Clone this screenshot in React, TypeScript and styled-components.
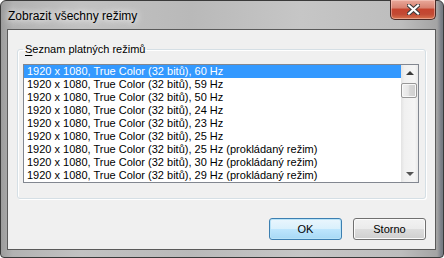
import React from "react";
import styled, { createGlobalStyle } from "styled-components";

const GlobalStyle = createGlobalStyle`
  html, body {
    margin: 0;
    padding: 0;
    background: #ffffff;
  }
  body {
    width: 444px;
    height: 258px;
    overflow: hidden;
    font-family: "Liberation Sans", "Noto Sans", sans-serif;
    font-size: 11px;
    color: #000;
  }
`;

const modes = [
  "1920 x 1080, True Color (32 bitů), 60 Hz",
  "1920 x 1080, True Color (32 bitů), 59 Hz",
  "1920 x 1080, True Color (32 bitů), 50 Hz",
  "1920 x 1080, True Color (32 bitů), 24 Hz",
  "1920 x 1080, True Color (32 bitů), 23 Hz",
  "1920 x 1080, True Color (32 bitů), 25 Hz",
  "1920 x 1080, True Color (32 bitů), 25 Hz (prokládaný režim)",
  "1920 x 1080, True Color (32 bitů), 30 Hz (prokládaný režim)",
  "1920 x 1080, True Color (32 bitů), 29 Hz (prokládaný režim)",
];

const Window = styled.div`
  box-sizing: border-box;
  width: 444px;
  height: 258px;
  border: 1px solid #3a3a3a;
  border-radius: 6px 6px 4px 4px;
  padding: 0 7px 7px 6px;
  display: flex;
  flex-direction: column;
  background: linear-gradient(
    to right,
    #9c9c9c 0px,
    #b2b2b2 12px,
    #c2c2c2 80px,
    #b9b9b9 190px,
    #c6c6c6 300px,
    #bdbdbd 400px,
    #a4a4a4 436px,
    #7d8189 440px,
    #6e7279 444px
  );
`;

const TitleBar = styled.div`
  height: 28px;
  display: flex;
  align-items: flex-start;
  justify-content: space-between;
`;

const Title = styled.span`
  margin: 7px 0 0 1px;
  line-height: 16px;
  font-size: 12px;
  color: #000;
  text-shadow: 0 0 6px #fff, 0 0 10px rgba(255, 255, 255, 0.9);
`;

const CloseButton = styled.button`
  box-sizing: border-box;
  width: 46px;
  height: 20px;
  margin-top: -1px;
  padding: 0;
  border: 1px solid #4a2a26;
  border-top: none;
  border-radius: 0 0 5px 5px;
  display: flex;
  align-items: center;
  justify-content: center;
  background: linear-gradient(
    to bottom,
    #e9a99b 0%,
    #d88372 40%,
    #c5442e 50%,
    #c24a34 75%,
    #d7744e 100%
  );
  box-shadow: inset 0 0 0 1px rgba(255, 220, 210, 0.45);
`;

const Client = styled.div`
  flex: 1;
  border: 1px solid #5a5a5a;
  background: #f0f0f0;
  display: flex;
  flex-direction: column;
`;

const Group = styled.fieldset`
  margin: 11px 9px 0 9px;
  padding: 7px 6px 15px 5px;
  border: 1px solid #d5dfe5;
  border-radius: 3px;
  box-shadow: inset 1px 1px 0 #fff, 1px 1px 0 #fff;
  min-width: 0;
`;

const Legend = styled.legend`
  padding: 0 2px;
  line-height: 16px;
  height: 16px;
  font-size: 11px;
  color: #000;

  u {
    text-decoration: underline;
    text-underline-offset: 2px;
  }
`;

const ListBox = styled.div`
  height: 117px;
  border: 1px solid #828790;
  background: #fff;
  display: flex;
`;

const Items = styled.ul`
  flex: 1;
  margin: 0;
  padding: 0;
  list-style: none;
  overflow: hidden;
`;

const Item = styled.li<{ $selected?: boolean }>`
  height: 13px;
  line-height: 13px;
  padding-left: 3px;
  white-space: nowrap;
  font-size: 11px;
  color: ${(p) => (p.$selected ? "#fff" : "#000")};
  background: ${(p) => (p.$selected ? "#3399ff" : "transparent")};
`;

const ScrollBar = styled.div`
  width: 17px;
  display: flex;
  flex-direction: column;
  background: linear-gradient(to right, #e3e3e3, #f0f0f0 20%, #f5f5f5 80%, #e9e9e9);
`;

const ArrowButton = styled.div`
  height: 17px;
  display: flex;
  align-items: center;
  justify-content: center;
`;

const Arrow = styled.span<{ $down?: boolean }>`
  width: 0;
  height: 0;
  border-left: 4px solid transparent;
  border-right: 4px solid transparent;
  ${(p) =>
    p.$down
      ? "border-top: 4px solid #555; margin-top: 1px;"
      : "border-bottom: 4px solid #3a3a3a; margin-bottom: 1px;"}
`;

const Track = styled.div`
  flex: 1;
  padding-top: 1px;
`;

const Thumb = styled.div`
  box-sizing: border-box;
  height: 15px;
  margin: 0 1px 0 0;
  border: 1px solid #979797;
  border-radius: 2px;
  background: linear-gradient(to right, #f1f1f1, #e6e6e6 45%, #d6d6d6 55%, #cfcfcf);
  box-shadow: inset 0 0 0 1px #f8f8f8;
`;

const Footer = styled.div`
  display: flex;
  justify-content: flex-end;
  gap: 11px;
  margin: 19px 9px 0 0;
`;

const Button = styled.button<{ $default?: boolean }>`
  box-sizing: border-box;
  width: 73px;
  height: 22px;
  padding: 0;
  border-radius: 3px;
  font-family: "Liberation Sans", "Noto Sans", sans-serif;
  font-size: 11px;
  color: #000;
  border: 1px solid ${(p) => (p.$default ? "#3c7fb1" : "#707070")};
  box-shadow: inset 0 0 0 1px ${(p) => (p.$default ? "#b8e3f8" : "#fbfbfb")};
  background: ${(p) =>
    p.$default
      ? "linear-gradient(to bottom, #eaf6fd 0%, #d9f0fc 50%, #bee6fd 50%, #a7d9f5 100%)"
      : "linear-gradient(to bottom, #f2f2f2 0%, #ebebeb 50%, #dddddd 50%, #cfcfcf 100%)"};
`;

const CloseGlyph = () => (
  <svg width="13" height="11" viewBox="0 0 13 11">
    <path d="M2 1.5 L11 9.5 M11 1.5 L2 9.5" stroke="#3b3b3b" strokeWidth="4.2" strokeLinecap="square" />
    <path d="M2 1.5 L11 9.5 M11 1.5 L2 9.5" stroke="#ffffff" strokeWidth="2.2" strokeLinecap="square" />
  </svg>
);

export default function App() {
  return (
    <>
      <GlobalStyle />
      <Window>
        <TitleBar>
          <Title>Zobrazit všechny režimy</Title>
          <CloseButton aria-label="Zavřít">
            <CloseGlyph />
          </CloseButton>
        </TitleBar>
        <Client>
          <Group>
            <Legend>
              <u>S</u>eznam platných režimů
            </Legend>
            <ListBox>
              <Items>
                {modes.map((m, i) => (
                  <Item key={i} $selected={i === 0}>
                    {m}
                  </Item>
                ))}
              </Items>
              <ScrollBar>
                <ArrowButton>
                  <Arrow />
                </ArrowButton>
                <Track>
                  <Thumb />
                </Track>
                <ArrowButton>
                  <Arrow $down />
                </ArrowButton>
              </ScrollBar>
            </ListBox>
          </Group>
          <Footer>
            <Button $default>OK</Button>
            <Button>Storno</Button>
          </Footer>
        </Client>
      </Window>
    </>
  );
}
